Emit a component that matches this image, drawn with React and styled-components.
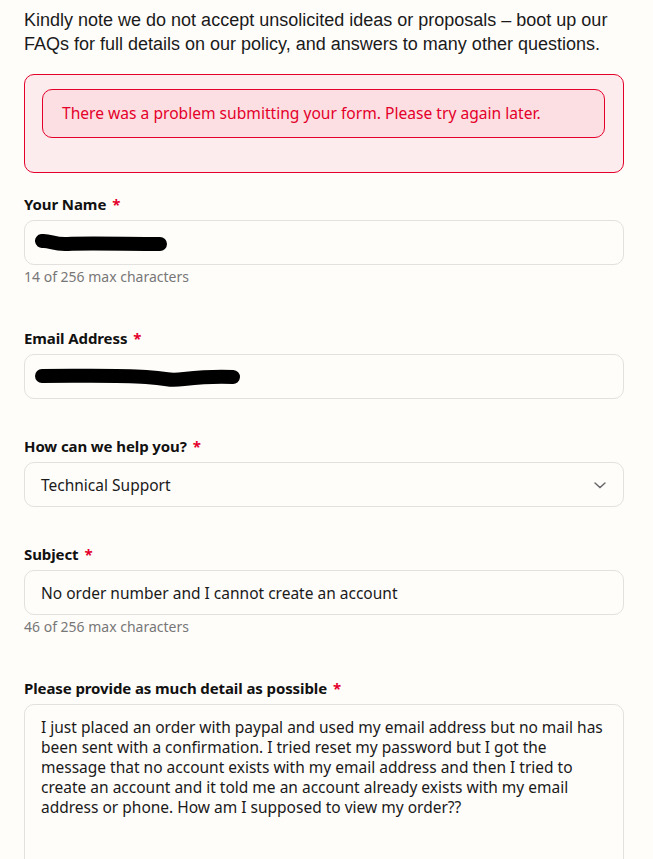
import React from 'react';
import styled, { createGlobalStyle } from 'styled-components';

const GlobalStyle = createGlobalStyle`
	html, body {
		margin: 0;
		padding: 0;
		background: #fffdfa;
	}
	body {
		font-family: 'Noto Sans', 'Open Sans', sans-serif;
		color: #1a1a1a;
	}
`;

const Page = styled.main`
	padding: 8px 29px 0 24px;
	width: 600px;
`;

const Intro = styled.p`
	font-family: 'Liberation Sans', Arial, sans-serif;
	font-size: 18px;
	line-height: 24px;
	color: #1a1a1a;
	margin: 0 0 18px;
`;

const ErrorPanel = styled.div`
	border: 1px solid #e4002b;
	border-radius: 10px;
	background: #fdeced;
	padding: 14px 18px 34px 17px;
`;

const ErrorMessage = styled.div`
	border: 1px solid #e4002b;
	border-radius: 10px;
	background: #fcdfe2;
	color: #e4002b;
	font-size: 15.6px;
	line-height: 47px;
	padding: 0 19px;
`;

const Form = styled.form`
	margin-top: 21px;
	display: flex;
	flex-direction: column;
`;

const Field = styled.div`
	display: flex;
	flex-direction: column;
	margin-bottom: 37px;
`;

const Label = styled.label`
	font-size: 15px;
	font-weight: 700;
	line-height: 20px;
	letter-spacing: -0.1px;
	margin-bottom: 6px;
	color: #111;
`;

const Star = styled.span`
	color: #e4002b;
	margin-left: 6px;
`;

const Box = styled.div`
	box-sizing: border-box;
	height: ${p => p.$tall ? '200px' : '45px'};
	border: 1px solid #e3e1dd;
	border-radius: 10px;
	background: #fffdfa;
	display: flex;
	align-items: ${p => p.$tall ? 'flex-start' : 'center'};
	justify-content: space-between;
	padding: ${p => p.$tall ? '12px 16px' : '0 16px'};
	font-size: 15.5px;
	line-height: 20px;
	color: #1a1a1a;
`;

const Hint = styled.div`
	font-size: 14px;
	line-height: 24px;
	height: 26px;
	color: #777;
`;

const Scribble = ({ d, w }) => (
	<svg width={w} height="24" viewBox={`0 0 ${w} 24`} style={{ marginLeft: -6 }}>
		<path d={d} stroke="#000" strokeWidth="14" strokeLinecap="round" fill="none" />
	</svg>
);

const Chevron = () => (
	<svg width="14" height="14" viewBox="0 0 14 14">
		<path d="M2 5l5 4.5L12 5" stroke="#666" strokeWidth="1.4" fill="none" strokeLinecap="round" />
	</svg>
);

export default function App() {
	return (
		<>
			<GlobalStyle />
			<Page>
				<Intro>
					Kindly note we do not accept unsolicited ideas or proposals – boot up our FAQs for full details on our policy, and answers to many other questions.
				</Intro>
				<ErrorPanel>
					<ErrorMessage>There was a problem submitting your form. Please try again later.</ErrorMessage>
				</ErrorPanel>
				<Form>
					<Field>
						<Label>Your Name<Star>*</Star></Label>
						<Box>
							<Scribble w={140} d="M7 10c8 -1 12 4 26 3s60 0 92 0" />
						</Box>
						<Hint>14 of 256 max characters</Hint>
					</Field>
					<Field>
						<Label>Email Address<Star>*</Star></Label>
						<Box>
							<Scribble w={214} d="M7 11c40 0 75 -1 104 1s20 4 38 2s30 -3 49 -2" />
						</Box>
					</Field>
					<Field>
						<Label>How can we help you?<Star>*</Star></Label>
						<Box>
							<span>Technical Support</span>
							<Chevron />
						</Box>
					</Field>
					<Field>
						<Label>Subject<Star>*</Star></Label>
						<Box>No order number and I cannot create an account</Box>
						<Hint>46 of 256 max characters</Hint>
					</Field>
					<Field>
						<Label>Please provide as much detail as possible<Star>*</Star></Label>
						<Box $tall>
							I just placed an order with paypal and used my email address but no mail has been sent with a confirmation. I tried reset my password but I got the message that no account exists with my email address and then I tried to create an account and it told me an account already exists with my email address or phone. How am I supposed to view my order??
						</Box>
					</Field>
				</Form>
			</Page>
		</>
	);
}
